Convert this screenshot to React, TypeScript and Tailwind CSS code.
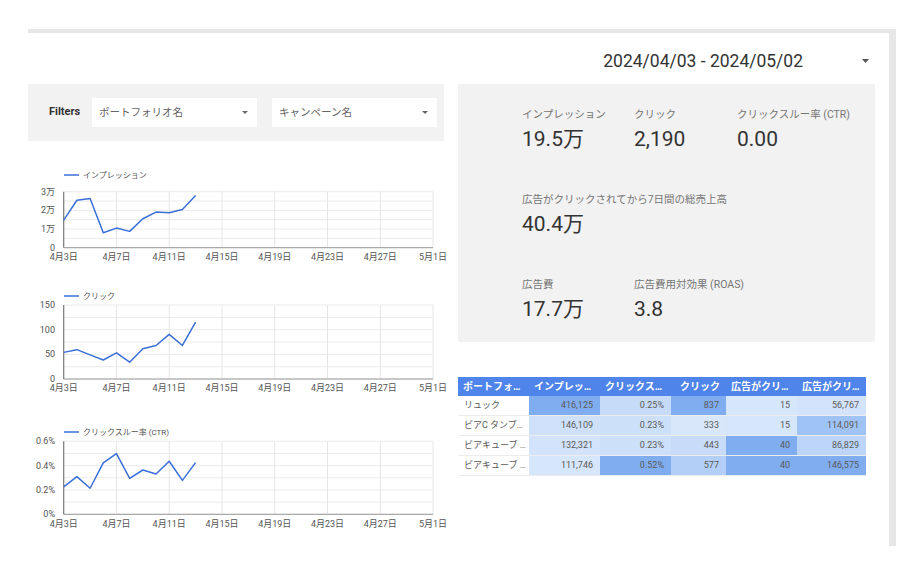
import React from "react";

const X0 = 35.7;
const X1 = 405;
const TICKS = ["4月3日", "4月7日", "4月11日", "4月15日", "4月19日", "4月23日", "4月27日", "5月1日"];
const BLUE = "#3a6fd8";

type ChartProps = {
  h: number;
  legend: string;
  legendY: number;
  top: number;
  bottom: number;
  labelY: number;
  yLabels: string[];
  data: number[];
  max: number;
};

function Chart({ h, legend, legendY, top, bottom, labelY, yLabels, data, max }: ChartProps) {
  const dx = (X1 - X0) / 28;
  const pts = data
    .map((v, i) => `${(X0 + i * dx).toFixed(2)},${(bottom - (v / max) * (bottom - top)).toFixed(2)}`)
    .join(" ");
  const hLines = Array.from({ length: 7 }, (_, i) => top + (i * (bottom - top)) / 6);
  return (
    <svg width={420} height={h} className="block overflow-visible">
      <line x1={36} x2={51} y1={legendY} y2={legendY} stroke={BLUE} strokeWidth={1.5} />
      <text x={55} y={legendY} dominantBaseline="central" fontSize={8} fill="#555">
        {legend}
      </text>
      {hLines.map((y, i) => (
        <line key={"h" + i} x1={X0} x2={X1} y1={y} y2={y} stroke="#ebebeb" strokeWidth={1} />
      ))}
      {TICKS.map((_, i) =>
        i === 0 ? null : (
          <line
            key={"v" + i}
            x1={X0 + i * 4 * dx}
            x2={X0 + i * 4 * dx}
            y1={top}
            y2={bottom}
            stroke="#e6e6e6"
            strokeWidth={1}
          />
        )
      )}
      <line x1={X0} x2={X0} y1={top} y2={bottom} stroke="#777" strokeWidth={1.2} />
      <line x1={X0} x2={X1} y1={bottom} y2={bottom} stroke="#999" strokeWidth={1} />
      {yLabels.map((t, i) => (
        <text
          key={"y" + i}
          x={27}
          y={top + (i * (bottom - top)) / 3}
          textAnchor="end"
          dominantBaseline="central"
          fontSize={9}
          fill="#555"
        >
          {t}
        </text>
      ))}
      {TICKS.map((t, i) => (
        <text
          key={"x" + i}
          x={X0 + i * 4 * dx}
          y={labelY}
          textAnchor="middle"
          dominantBaseline="central"
          fontSize={9}
          fill="#555"
        >
          {t}
        </text>
      ))}
      <polyline points={pts} fill="none" stroke={BLUE} strokeWidth={1.5} strokeLinejoin="round" />
    </svg>
  );
}

function Caret({ w = 7, color = "#555" }: { w?: number; color?: string }) {
  return (
    <svg width={w} height={Math.ceil(w / 2) + 1} viewBox={`0 0 ${w} ${Math.ceil(w / 2) + 1}`}>
      <polygon points={`0,0 ${w},0 ${w / 2},${Math.ceil(w / 2)}`} fill={color} />
    </svg>
  );
}

function Dropdown({ label }: { label: string }) {
  return (
    <div className="w-[165px] h-[29px] bg-white flex items-center pl-[7px] pr-[9px]">
      <span className="text-[10.5px] text-[#666] flex-1">{label}</span>
      <Caret w={6} color="#666" />
    </div>
  );
}

function Kpi({ label, value, w }: { label: string; value: string; w: string }) {
  return (
    <div className={"flex flex-col " + w}>
      <div className="h-[14px] leading-[14px] text-[10.5px] text-[#757575] whitespace-nowrap">{label}</div>
      <div className="mt-[5px] h-[24px] leading-[24px] text-[21px] text-[#333]">{value}</div>
    </div>
  );
}

type Cell = { v: string; bg: string };
const rows: { name: string; cells: Cell[] }[] = [
  {
    name: "リュック",
    cells: [
      { v: "416,125", bg: "bg-[#80adf0]" },
      { v: "0.25%", bg: "bg-[#c6dbf8]" },
      { v: "837", bg: "bg-[#80adf0]" },
      { v: "15", bg: "bg-[#d6e6fb]" },
      { v: "56,767", bg: "bg-[#d2e3fb]" },
    ],
  },
  {
    name: "ビアC タンブラー",
    cells: [
      { v: "146,109", bg: "bg-[#cfe1fa]" },
      { v: "0.23%", bg: "bg-[#cde0fa]" },
      { v: "333", bg: "bg-[#d9e7fb]" },
      { v: "15", bg: "bg-[#d6e6fb]" },
      { v: "114,091", bg: "bg-[#a0c3f5]" },
    ],
  },
  {
    name: "ビアキューブ タンブラー",
    cells: [
      { v: "132,321", bg: "bg-[#d2e3fb]" },
      { v: "0.23%", bg: "bg-[#cde0fa]" },
      { v: "443", bg: "bg-[#c8dcf9]" },
      { v: "40", bg: "bg-[#80adf0]" },
      { v: "86,829", bg: "bg-[#bcd5f8]" },
    ],
  },
  {
    name: "ビアキューブ グラス",
    cells: [
      { v: "111,746", bg: "bg-[#d6e6fb]" },
      { v: "0.52%", bg: "bg-[#80adf0]" },
      { v: "577", bg: "bg-[#b3cff7]" },
      { v: "40", bg: "bg-[#80adf0]" },
      { v: "146,575", bg: "bg-[#80adf0]" },
    ],
  },
];

const colW = ["w-[71px]", "w-[71px]", "w-[55px]", "w-[71px]", "w-[69px]"];
const headers = [
  "インプレッション",
  "クリックスルー率 (CTR)",
  "クリック",
  "広告がクリックされてから7日間の総注文数",
  "広告がクリックされてから7日間の総売上高",
];

function Table() {
  return (
    <div className="w-[408px] flex flex-col">
      <div className="flex h-[19px] bg-[#4f84ea] text-white font-bold text-[10px] leading-[19px]">
        <div className="w-[71px] pl-[5px] pr-[3px] truncate">ポートフォリオ名</div>
        {headers.map((h, i) => (
          <div key={i} className={colW[i] + " pl-[5px] pr-[6px] truncate text-right"}>
            {h}
          </div>
        ))}
      </div>
      {rows.map((r, ri) => (
        <div key={ri} className="flex h-[20px] leading-[19px] border-b border-[#ececec] text-[#5a5a5a] text-[9px]">
          <div className="w-[71px] pl-[6px] pr-[3px] truncate bg-white">{r.name}</div>
          {r.cells.map((c, ci) => (
            <div key={ci} className={colW[ci] + " " + c.bg + " pr-[7px] text-right"}>
              {c.v}
            </div>
          ))}
        </div>
      ))}
    </div>
  );
}

export default function App() {
  return (
    <div className="w-[906px] h-[568px] bg-white overflow-hidden font-['Roboto','Noto_Sans_CJK_JP',sans-serif]">
      <div className="ml-[28px] mt-[29px] w-[868px] h-[517px] border-t-4 border-r-[7px] border-[#e7e7e7] pr-[14px] flex flex-col">
        <div className="h-[51px] pt-[5px] flex items-center justify-end">
          <span className="text-[17.5px] text-[#333]">2024/04/03 - 2024/05/02</span>
          <span className="ml-[59px] mr-[6px] flex items-center">
            <Caret w={7} color="#555" />
          </span>
        </div>
        <div className="flex gap-[14px]">
          <div className="w-[416px] flex flex-col">
            <div className="h-[57px] bg-[#f2f2f2] flex items-center pl-[21px] pr-[7px]">
              <span className="text-[11px] font-bold text-[#333] w-[43px]">Filters</span>
              <Dropdown label="ポートフォリオ名" />
              <div className="w-[15px]" />
              <Dropdown label="キャンペーン名" />
            </div>
            <div>
              <Chart
                h={129}
                legend="インプレッション"
                legendY={34}
                top={50.7}
                bottom={106.7}
                labelY={115.7}
                yLabels={["3万", "2万", "1万", "0"]}
                data={[1.48, 2.54, 2.64, 0.8, 1.05, 0.875, 1.55, 1.91, 1.875, 2.05, 2.8]}
                max={3}
              />
              <Chart
                h={130}
                legend="クリック"
                legendY={26}
                top={35}
                bottom={109}
                labelY={118.3}
                yLabels={["150", "100", "50", "0"]}
                data={[54, 59.5, 49, 38.5, 53, 34, 61.5, 68, 90.5, 68, 115.5]}
                max={150}
              />
              <Chart
                h={136}
                legend="クリックスルー率 (CTR)"
                legendY={32}
                top={41.3}
                bottom={114.3}
                labelY={124.3}
                yLabels={["0.6%", "0.4%", "0.2%", "0%"]}
                data={[0.225, 0.31, 0.214, 0.422, 0.499, 0.296, 0.364, 0.331, 0.436, 0.279, 0.425]}
                max={0.6}
              />
            </div>
          </div>
          <div className="w-[417px] flex flex-col">
            <div className="h-[258px] bg-[#f2f2f2] pl-[64px] pt-[24px] flex flex-col gap-[42px]">
              <div className="flex">
                <Kpi label="インプレッション" value="19.5万" w="w-[112px]" />
                <Kpi label="クリック" value="2,190" w="w-[103px]" />
                <Kpi label="クリックスルー率 (CTR)" value="0.00" w="w-[120px]" />
              </div>
              <div className="flex">
                <Kpi label="広告がクリックされてから7日間の総売上高" value="40.4万" w="w-[300px]" />
              </div>
              <div className="flex">
                <Kpi label="広告費" value="17.7万" w="w-[112px]" />
                <Kpi label="広告費用対効果 (ROAS)" value="3.8" w="w-[150px]" />
              </div>
            </div>
            <div className="mt-[35px]">
              <Table />
            </div>
          </div>
        </div>
      </div>
    </div>
  );
}
